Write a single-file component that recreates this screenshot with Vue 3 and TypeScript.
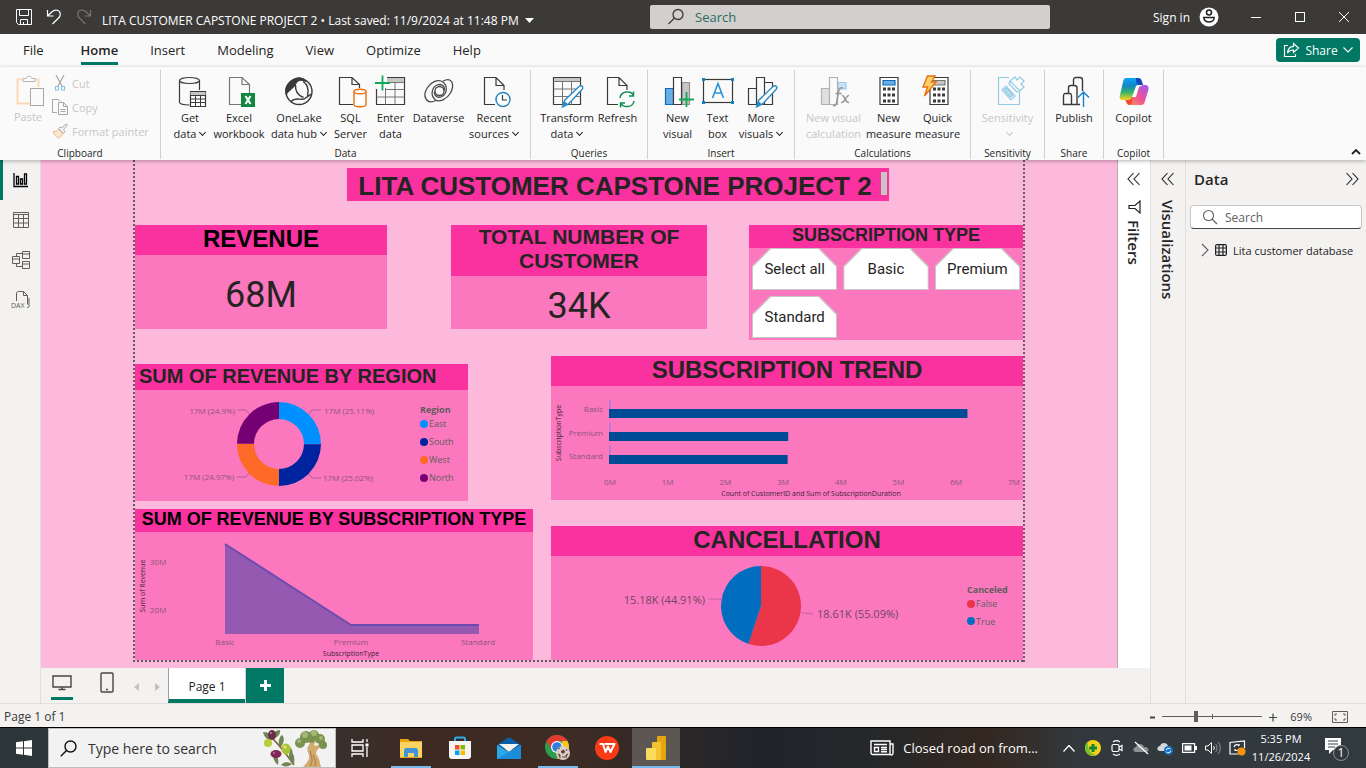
<script setup lang="ts">
import { ref } from 'vue'

interface Slice { label: string; value: number; color: string }

const menu = ['File', 'Home', 'Insert', 'Modeling', 'View', 'Optimize', 'Help']
const activeMenu = ref('Home')
const subscriptions = ['Select all', 'Basic', 'Premium', 'Standard']
const zoom = ref(69)

const regions: Slice[] = [
  { label: 'East', value: 25.11, color: '#0090ff' },
  { label: 'South', value: 25.02, color: '#0023a0' },
  { label: 'West', value: 24.97, color: '#ff6a28' },
  { label: 'North', value: 24.9, color: '#740074' },
]
const cancelled: Slice[] = [
  { label: 'False', value: 55.09, color: '#eb3548' },
  { label: 'True', value: 44.91, color: '#006dbf' },
]
const trend = [
  { label: 'Basic', value: 6.18 },
  { label: 'Premium', value: 3.09 },
  { label: 'Standard', value: 3.08 },
]
const ticks = [0, 1, 2, 3, 4, 5, 6, 7]

function arcs(slices: Slice[], cx: number, cy: number, outer: number, inner: number) {
  const total = slices.reduce((sum, s) => sum + s.value, 0)
  let from = 0
  return slices.map((s) => {
    const to = from + (s.value / total) * Math.PI * 2
    const at = (r: number, a: number) => `${(cx + r * Math.sin(a)).toFixed(2)} ${(cy - r * Math.cos(a)).toFixed(2)}`
    const large = to - from > Math.PI ? 1 : 0
    const d = `M${at(outer, from)}A${outer} ${outer} 0 ${large} 1 ${at(outer, to)}L${at(inner, to)}` +
      (inner ? `A${inner} ${inner} 0 ${large} 0 ${at(inner, from)}Z` : 'Z')
    from = to
    return { d, color: s.color, label: s.label }
  })
}
const donut = arcs(regions, 144, 54, 42, 25)
const pie = arcs(cancelled, 210, 50, 40, 0)
</script>

<template>
  <div class="window">
    <header class="titlebar">
      <div class="quick">
        <button aria-label="Save"><svg width="16" height="16" viewBox="0 0 16 16" fill="none" stroke="#fff"><path d="M.5.500h15v15H2.500l-2-2zM3.500.500v6h9v-6M4.500 15.500v-5h7v5M7.500 13v2.500" /></svg></button>
        <button aria-label="Undo"><svg width="16" height="16" viewBox="0 0 16 16" fill="none" stroke="#fff" stroke-width="1.200"><path d="M1.500 1v6h6M1.500 7 6 2.800C9-.2 14 1 14.300 5c.1 2-.6 3-2 4.300L6.500 15" /></svg></button>
        <button aria-label="Redo"><svg width="16" height="16" viewBox="0 0 16 16" fill="none" stroke="#777674" stroke-width="1.200"><path d="M14.500 1v6h-6M14.500 7 10 2.800C7-.2 2 1 1.700 5c-.1 2 .6 3 2 4.300L9.500 15" /></svg></button>
      </div>
      <button class="doc-name">LITA CUSTOMER CAPSTONE PROJECT 2 • Last saved: 11/9/2024 at 11:48 PM
        <svg width="9" height="5" viewBox="0 0 9 5"><path d="M0 0h9L4.500 5z" fill="#fff" /></svg>
      </button>
      <label class="top-search">
        <svg width="18" height="18" viewBox="0 0 18 18" fill="none" stroke="#3b3a39" stroke-width="1.300"><circle cx="11" cy="6.500" r="5" /><path d="M7.500 10 1.500 16" /></svg>
        <input type="text" placeholder="Search" aria-label="Search" />
      </label>
      <div class="account">
        <button class="signin">Sign in
          <svg width="20" height="20" viewBox="0 0 20 20"><circle cx="10" cy="10" r="9.500" fill="#fff" /><circle cx="10" cy="5.500" r="2.500" fill="none" stroke="#222" stroke-width="1.500" /><path d="M4.800 10.500h10.400c0 6-10.400 6-10.400 0z" fill="none" stroke="#222" stroke-width="1.500" /></svg>
        </button>
        <button class="winbtn" aria-label="Minimize"><svg width="12" height="12" viewBox="0 0 12 12" stroke="#fff"><path d="M1 6.500h10" /></svg></button>
        <button class="winbtn" aria-label="Maximize"><svg width="12" height="12" viewBox="0 0 12 12" fill="none" stroke="#fff"><rect x="1.500" y="1.500" width="9" height="9" /></svg></button>
        <button class="winbtn" aria-label="Close"><svg width="12" height="12" viewBox="0 0 12 12" stroke="#fff"><path d="m1 1 10 10M11 1 1 11" /></svg></button>
      </div>
    </header>

    <nav class="menu">
      <button v-for="m in menu" :key="m" :class="{ active: m === activeMenu }" @click="activeMenu = m">{{ m }}</button>
      <button class="share">
        <svg width="17" height="16" viewBox="0 0 17 16" fill="none" stroke="#fff" stroke-width="1.200"><path d="M5 3.500H1.500v11h11V12" /><path d="M10.500 1.500 15.500 6l-5 4.500V8C7.500 7.800 5.800 9 4.500 11c.3-3.800 2.500-6.500 6-6.700z" /></svg>
        Share
        <svg width="10" height="6" viewBox="0 0 10 6" fill="none" stroke="#fff" stroke-width="1.200"><path d="m.5.500 4.500 4.500L9.500.5" /></svg>
      </button>
    </nav>

    <section class="ribbon">
      <div class="group g-clip">
        <div class="tools">
          <button class="tool w-paste" disabled>
            <svg viewBox="0 0 32 32" fill="none"><path d="M10 4.500H5.500v24H18M22 4.500h4.500V12" stroke="#fbd9b5" stroke-width="2" /><path d="M11 6.500v-3h3c1-3 5-3 6 0h3v3z" stroke="#b8b6b4" fill="#fafafa" /><rect x="18.500" y="13.500" width="13" height="17" stroke="#a9a7a5" fill="#fafafa" /></svg>
            <span>Paste</span>
          </button>
          <div class="mini">
            <button disabled><svg width="16" height="16" viewBox="0 0 16 16" fill="none"><path d="m4 0 6 11M12 0 6 11" stroke="#a9a7a5" stroke-width="1.200" /><rect x="3.500" y="11.500" width="3" height="3.500" stroke="#83c1e6" /><rect x="9.500" y="11.500" width="3" height="3.500" stroke="#83c1e6" /></svg>Cut</button>
            <button disabled><svg width="16" height="16" viewBox="0 0 16 16" fill="none" stroke="#a9a7a5"><path d="M5 13.500H.5V.500h6l1.500 2M6.500 3.500h5l4 4v8h-9zM11.500 3.500v4h4M8.500 10.500h5M8.500 12.500h5" /></svg>Copy</button>
            <button disabled><svg width="16" height="16" viewBox="0 0 16 16" fill="none"><path d="M1 8.500c2.500.2 4-.5 5.500-2l4.500 4c-1 2-2.500 3.500-4.500 4.500C4 13.500 2 11.500 1 8.500z" fill="#fce7d3" stroke="#f5b98b" /><path d="M6.500 5.500 11.500 10.500l1.500-2-1.500-2 4-4.500-1.500-1.300-4 4.300-1.800-1z" stroke="#a9a7a5" fill="#fafafa" /></svg>Format painter</button>
          </div>
        </div>
        <div class="caption">Clipboard</div>
      </div>

      <div class="group g-data">
        <div class="tools">
          <button class="tool w-get">
            <svg viewBox="0 0 32 32" fill="none" stroke="#3b3a39" stroke-width="1.200"><ellipse cx="15.500" cy="4.500" rx="10" ry="3" /><path d="M5.500 4.500V26c0 2 5 3 10 3M25.500 4.500V14" /><path d="M16.500 15.500h15v15h-15z" fill="#fff" /><path d="M16.500 16h15v3h-15z" fill="#c8c6c4" stroke="none" /><path d="M16.500 19.500h15M16.500 23h15M16.500 26.500h15M21.500 19v12M26.500 19v12" stroke-width="1" /></svg>
            <span>Get<br />data<i class="chev"></i></span>
          </button>
          <button class="tool w-excel">
            <svg viewBox="0 0 32 32" fill="none" stroke="#797775" stroke-width="1.200"><path d="M18 28.500H6.500v-27H19l7.500 7V17M19 1.500v7h7.500" /><path d="M18 17h14v14H18z" fill="#10893e" stroke="none" /><path d="m22.500 20 5 8M27.500 20l-5 8" stroke="#fff" stroke-width="2" /></svg>
            <span>Excel<br />workbook</span>
          </button>
          <button class="tool w-lake">
            <svg viewBox="0 0 32 32" fill="none" stroke="#3b3a39" stroke-width="1.400"><circle cx="16" cy="15.500" r="13" /><path d="M11 3.500C14 1 20 1.500 22 5c-4-1.500-8-.5-9.500 3C10 13 4 15 3.300 18.500 1.500 12 5 6 11 3.500z" fill="#3b3a39" /><path d="M12.500 9c-.5 7 4 11 8 12.500M8 25.500c5-5 11-.5 14-3 3-2 5-4 7-4.500M20 5.500c5 3 6 8 4.500 14.500" /></svg>
            <span>OneLake<br />data hub<i class="chev"></i></span>
          </button>
          <button class="tool w-sql">
            <svg viewBox="0 0 32 32" fill="none" stroke="#3b3a39" stroke-width="1.200"><path d="M18 28.500H4.500v-27H17l7.500 7V12M17 1.500v7h7.500" /><path d="M19 15.500v13c0 3 12 3 12 0v-13" fill="#fff" stroke="#e8700f" stroke-width="1.400" /><ellipse cx="25" cy="15.500" rx="6" ry="2.200" fill="#fff" stroke="#e8700f" stroke-width="1.400" /></svg>
            <span>SQL<br />Server</span>
          </button>
          <button class="tool w-enter">
            <svg viewBox="0 0 32 32" fill="none" stroke="#3b3a39" stroke-width="1.200"><path d="M12 1.500h17.500v27h-28V13" /><path d="M12 2h17v4H12z" fill="#c8c6c4" stroke="none" /><path d="M12 6.500h17.500M10 13.500h19.500M1.500 21h28M10.500 12v16.500M20 6.500v22" stroke="#797775" stroke-width="1" /><path d="M7.500-.5v15M0 7h15" stroke="#0fa958" stroke-width="1.800" /></svg>
            <span>Enter<br />data</span>
          </button>
          <button class="tool w-verse">
            <svg viewBox="0 0 32 32" fill="none" stroke="#4a4947" stroke-width="1.300"><path d="M13 24.500C3 29-1 20 4.500 11.500 8 6 15 2.500 20 6c5 4 4 12-1 14.500-4 2-8-.5-7.500-5" /><path d="M20 5c9-4.500 12 3 7.500 12C24 23 16 27 12 23.500 7 19 9 11.500 14 9c4-1.500 8 .5 7.500 5.500" /><circle cx="16.500" cy="15" r="4.500" /></svg>
            <span>Dataverse</span>
          </button>
          <button class="tool w-recent">
            <svg viewBox="0 0 32 32" fill="none" stroke="#3b3a39" stroke-width="1.200"><path d="M17 28.500H6.500v-27H18l8 8V14M18 1.500v8h8" /><circle cx="25" cy="23.500" r="7" fill="#fff" stroke="#2b88b8" stroke-width="1.500" /><path d="M24.500 19v5H29" /></svg>
            <span>Recent<br />sources<i class="chev"></i></span>
          </button>
        </div>
        <div class="caption">Data</div>
      </div>

      <div class="group g-query">
        <div class="tools">
          <button class="tool w-trans">
            <svg viewBox="0 0 32 32" fill="none" stroke="#3b3a39" stroke-width="1.200"><path d="M2.500 1.500h27v27h-27z" /><path d="M3 2h26v3H3z" fill="#c8c6c4" stroke="none" /><path d="M2.500 5.500h27M2.500 13h27M2.500 20.500h27M11.500 5.500v23M20.500 5.500v23" stroke="#797775" stroke-width="1" /><path d="m11.500 31 2-6.500L28 10.500c3-2 5 1 3 3L17.500 28z" fill="#fff" stroke="#2b88c8" stroke-width="1.400" /><path d="m11.500 31 2-6 3.500 3.500z" fill="#2b88c8" stroke="none" /></svg>
            <span>Transform<br />data<i class="chev"></i></span>
          </button>
          <button class="tool w-refresh">
            <svg viewBox="0 0 32 32" fill="none" stroke="#3b3a39" stroke-width="1.200"><path d="M16 28.500H5.500v-27H17l8 8V14M17 1.500v8h8" /><path d="M18 22c1-7 11-8 13.500-2.500M31.500 15.500v4.500H27M32 25c-1 7-11 7-13.500 2M18.500 31.500V27H23" stroke="#119150" stroke-width="1.500" /></svg>
            <span>Refresh</span>
          </button>
        </div>
        <div class="caption">Queries</div>
      </div>

      <div class="group g-insert">
        <div class="tools">
          <button class="tool w-nv">
            <svg viewBox="0 0 32 32" fill="none" stroke="#3b3a39" stroke-width="1.200"><path d="M3.500 12.500h8v16h-8z" fill="#69afe5" stroke="#0f6cbd" /><path d="M20 6.500h7.500v22H20z" fill="#c8c6c4" stroke="#979593" /><path d="M11.500 1.500h8v27h-8z" fill="#fff" /><path d="M24.500 16v15M17 23.500h15" stroke="#0fa958" stroke-width="1.800" /></svg>
            <span>New<br />visual</span>
          </button>
          <button class="tool w-tb">
            <svg viewBox="0 0 32 32" fill="none"><rect x="1.500" y="3.500" width="29" height="23" stroke="#3b3a39" stroke-width="1.200" /><path d="M0 2h3v3H0zM29 2h3v3h-3zM0 25h3v3H0zM29 25h3v3h-3z" fill="#0f83c9" /><path d="m10.500 22 5.500-14.500L21.500 22M12.500 17h7" stroke="#2b93d1" stroke-width="1.600" /></svg>
            <span>Text<br />box</span>
          </button>
          <button class="tool w-mv">
            <svg viewBox="0 0 32 32" fill="none" stroke="#3b3a39" stroke-width="1.200"><path d="M3.500 12.500h8v16h-8zM11.500 1.500h8v27h-8zM19.500 6.500h8v22h-8z" /><path d="m11.500 31 2-6.500L28 10.500c3-2 5 1 3 3L17.500 28z" fill="#fff" stroke="#2b88c8" stroke-width="1.400" /><path d="m11.500 31 2-6 3.500 3.500z" fill="#2b88c8" stroke="none" /></svg>
            <span>More<br />visuals<i class="chev"></i></span>
          </button>
        </div>
        <div class="caption">Insert</div>
      </div>

      <div class="group g-calc">
        <div class="tools">
          <button class="tool w-nvc" disabled>
            <svg viewBox="0 0 32 32" fill="none" stroke="#b3b0ad" stroke-width="1.200"><path d="M3.500 12.500h8v16h-8z" fill="#e1dfdd" /><path d="M20 6.500h8V13h-8z" fill="#c7e3f7" stroke="#9cc9ea" /><path d="M11.500 1.500h8v27h-8z" fill="#fafafa" /><path d="M25 12c-3-1-4 1-4.500 4l-2 11c-.5 2.500-1.500 3-3.500 2.500M17.500 17.500h6M24 19.500c3-1 3 8 7 7M31 19.500c-3-1-4 8-8 7" stroke="#979593" stroke-width="1.500" /></svg>
            <span>New visual<br />calculation</span>
          </button>
          <button class="tool w-meas">
            <svg viewBox="0 0 32 32" fill="none" stroke="#3b3a39" stroke-width="1.200"><path d="M7 1.500h18v27H7z" fill="#fff" /><path d="M10 4.500h12v4.500H10z" fill="#69afe5" stroke="#0f6cbd" /><path d="M10 13h12M10 19h12M10 25h12" stroke-width="3" stroke-dasharray="3 1.500" /></svg>
            <span>New<br />measure</span>
          </button>
          <button class="tool w-meas">
            <svg viewBox="0 0 32 32" fill="none" stroke="#3b3a39" stroke-width="1.200"><path d="M8 1.500h18v27H8z" fill="#fff" /><path d="M11 4.500h12v4.500H11z" fill="#c8c6c4" stroke="#797775" /><path d="M11 13h12M11 19h12M11 25h12" stroke-width="3" stroke-dasharray="3 1.500" /><path d="M5.500 0H13l-3.500 6H14L2.500 20 5.500 11H1z" fill="#fdd066" stroke="#e8700f" stroke-width="1.400" /></svg>
            <span>Quick<br />measure</span>
          </button>
        </div>
        <div class="caption">Calculations</div>
      </div>

      <div class="group g-sens">
        <div class="tools">
          <button class="tool" disabled>
            <svg viewBox="0 0 32 32" fill="none" stroke="#93cbe6" stroke-width="1.200"><path d="M17 1.500H6.500v27h21V16" /><path d="m10 14 4-4 9 10-4 4zM13 13l7 8M18 5l5-4 2 3 3-3 4 4-3 3 3 3-4 4zM18 5l-1 3 8 8 3-1" /><path d="m12.500 14 2-2 6 7-2 2z" fill="#c7e3f2" /></svg>
            <span>Sensitivity<br /><i class="chev"></i></span>
          </button>
        </div>
        <div class="caption">Sensitivity</div>
      </div>

      <div class="group g-share">
        <div class="tools">
          <button class="tool">
            <svg viewBox="0 0 32 32" fill="none" stroke="#3b3a39" stroke-width="1.400"><path d="M5.500 28.500v-8c0-2 0-3 2-3h4c2 0 2 1 2 3v8zM10.500 17V12c0-2 1-2.500 2-2.500h4c2 0 2.500 1 2.500 2.500v16.500h-5.500M15.500 9V4c0-2 1-2.500 2.500-2.500h4c2 0 2.500 1 2.500 2.500v11M19 28.500h3" /><path d="M25.500 31V16M20 21.500l5.500-5.500 5.500 5.500" stroke="#0f83c9" /></svg>
            <span>Publish</span>
          </button>
        </div>
        <div class="caption">Share</div>
      </div>

      <div class="group g-copilot">
        <div class="tools">
          <button class="tool">
            <svg viewBox="0 0 32 32">
              <defs>
                <linearGradient id="cpA" x1="0" y1="0" x2="0" y2="1"><stop offset="0" stop-color="#0aa5f5" /><stop offset=".35" stop-color="#1485c9" /><stop offset=".65" stop-color="#36b56a" /><stop offset="1" stop-color="#fdd21c" /></linearGradient>
                <linearGradient id="cpB" x1="1" y1="0" x2="0" y2="1"><stop offset="0" stop-color="#9a5cf0" /><stop offset=".5" stop-color="#ee5097" /><stop offset="1" stop-color="#ff9c49" /></linearGradient>
              </defs>
              <path d="M8 2h12c2 0 3 1 3.500 2.500L25 9h-4c-2 0-3 .5-3.500 2.500L14 21c-.7 2-2 3-4 3H5c-3 0-4-2-3-5L5 6c.6-2.500 1.500-4 3-4z" fill="url(#cpA)" />
              <path d="M18 2h2c2 0 3 1 3.500 2.500L25 9h-5c-2-2-2-4-2-7z" fill="#1449c0" />
              <path d="M25 9h2c3 0 4 2 3.400 5L27 25c-.7 3-2 4-4 4H12c-2 0-3-1-3.500-2.500L7.500 24H10c2 0 3.300-1 4-3h4l3-10z" fill="url(#cpB)" />
              <path d="M7.500 24H10c2 0 3.300-1 4-3 .5 3 1 6-2 8-2 0-3-1-3.500-2.500z" fill="#f04a35" />
            </svg>
            <span>Copilot</span>
          </button>
        </div>
        <div class="caption">Copilot</div>
      </div>
      <button class="collapse" aria-label="Collapse ribbon"><svg width="10" height="6" viewBox="0 0 10 6" fill="none" stroke="#222" stroke-width="1.800"><path d="m1 5 4-4 4 4" /></svg></button>
    </section>

    <main class="work">
      <nav class="rail">
        <button class="on" aria-label="Report view"><svg width="16" height="16" viewBox="0 0 16 16" fill="none" stroke="#000" stroke-width="1.300"><path d="M1 1v13.500h14M3.500 4.500h2v7.500h-2zM7.500 7h2v5h-2zM11.500 2h2v10h-2z" /></svg></button>
        <button aria-label="Table view"><svg width="16" height="16" viewBox="0 0 16 16" fill="none" stroke="#605e5c"><path d="M.5.500h15v15H.5zM.5 2.500h15M.5 6.500h15M.5 11h15M5.500 2.500v13M10.500 2.500v13" /></svg></button>
        <button aria-label="Model view"><svg width="18" height="18" viewBox="0 0 18 18" fill="none" stroke="#605e5c"><path d="M.5 5.500h7v7h-7zM.5 8h7M10.500.500h7v7h-7zM10.500 3h7M10.500 10.500h7v7h-7zM10.500 13h7M4.500 5V2.500h6M4.500 13v2.500h6" /></svg></button>
        <button aria-label="DAX query view"><svg width="20" height="18" viewBox="0 0 20 18" fill="none" stroke="#605e5c"><path d="M5.500 10V3c0-2 .5-2.500 2-2.500h5l4 4v9M12.500.500v4h4M18 7v8c0 1-.5 1.500-2 1.500" /><text x="0" y="16.500" font-size="7" fill="#605e5c" stroke="none">DAX</text></svg></button>
      </nav>

      <section class="center">
        <div class="stage">
          <div class="canvas">
            <div class="sheet">
              <div class="banner-row">
                <h1 class="banner">LITA CUSTOMER CAPSTONE PROJECT 2<i class="handle"></i></h1>
              </div>
              <div class="kpis">
                <article class="card rev"><h2 class="h24 black">REVENUE</h2><p class="big">68M</p></article>
                <article class="card total"><h2 class="h22">TOTAL NUMBER OF CUSTOMER</h2><p class="big">34K</p></article>
                <article class="card slicer">
                  <h2 class="h18">SUBSCRIPTION TYPE</h2>
                  <div class="tiles"><button v-for="s in subscriptions" :key="s"><span>{{ s }}</span></button></div>
                </article>
              </div>
              <div class="charts">
                <div class="col left">
                  <article class="card region">
                    <h2 class="h20">SUM OF REVENUE BY REGION</h2>
                    <svg class="chart" viewBox="0 0 333 111">
                      <path v-for="a in donut" :key="a.label" :d="a.d" :fill="a.color" />
                      <g fill="none" stroke="#b35f94"><path d="m174 24 3-4h9M114 24l-3-4h-9M174 84l3 4h9M114 83l-3 4h-9" /></g>
                      <g class="lab"><text x="189" y="24">17M (25.11%)</text><text x="100" y="24" text-anchor="end">17M (24.9%)</text><text x="99" y="90" text-anchor="end">17M (24.97%)</text><text x="188" y="91">17M (25.02%)</text></g>
                      <text class="legend-t" x="285" y="23">Region</text>
                      <g v-for="(r, i) in regions" :key="r.label"><circle cx="289" :cy="34 + i * 18" r="4" :fill="r.color" /><text class="legend" x="294" :y="37 + i * 18">{{ r.label }}</text></g>
                    </svg>
                  </article>
                  <article class="card bysub">
                    <h2 class="h18 black">SUM OF REVENUE BY SUBSCRIPTION TYPE</h2>
                    <svg class="chart" viewBox="0 0 398 128">
                      <path d="M90 12 216 93H344V102H90z" fill="#9659b2" /><path d="M90 12 216 93H344" fill="none" stroke="#6c4bae" stroke-width="2" />
                      <g class="lab"><text x="15" y="33">30M</text><text x="15" y="81">20M</text><text x="90" y="113" text-anchor="middle">Basic</text><text x="216" y="113" text-anchor="middle">Premium</text><text x="343" y="113" text-anchor="middle">Standard</text></g>
                      <text class="axis" x="216" y="124">SubscriptionType</text>
                      <text class="axis" transform="translate(10 54) rotate(-90)">Sum of Revenue</text>
                    </svg>
                  </article>
                </div>
                <div class="col right">
                  <article class="card">
                    <h2 class="h24">SUBSCRIPTION TREND</h2>
                    <svg class="chart" viewBox="0 0 472 114">
                      <g v-for="(b, i) in trend" :key="b.label">
                        <rect x="58" :y="14 + i * 23" width="2" height="9" fill="#b77dd3" />
                        <rect x="58" :y="23 + i * 23" :width="b.value * 58" height="9" fill="#004b96" />
                        <text class="lab" x="52" :y="26 + i * 23.5" text-anchor="end">{{ b.label }}</text>
                      </g>
                      <text v-for="t in ticks" :key="t" class="lab" :x="59 + t * 57.7" y="99" text-anchor="middle">{{ t }}M</text>
                      <text class="axis" x="260" y="110">Count of CustomerID and Sum of SubscriptionDuration</text>
                      <text class="axis" transform="translate(10 47) rotate(-90)">SubscriptionType</text>
                    </svg>
                  </article>
                  <article class="card cancel">
                    <h2 class="h24">CANCELLATION</h2>
                    <svg class="chart" viewBox="0 0 472 104">
                      <path v-for="a in pie" :key="a.label" :d="a.d" :fill="a.color" />
                      <path d="M157 43h10l5 1M250 57h3l9 1" fill="none" stroke="#c9609a" />
                      <g class="lab-l"><text x="154" y="48" text-anchor="end">15.18K (44.91%)</text><text x="266" y="62">18.61K (55.09%)</text></g>
                      <text class="legend-t" x="416" y="37">Canceled</text>
                      <g v-for="(r, i) in cancelled" :key="r.label"><circle cx="420" :cy="48 + i * 17" r="4" :fill="r.color" /><text class="legend" x="425" :y="51 + i * 18">{{ r.label }}</text></g>
                    </svg>
                  </article>
                </div>
              </div>
            </div>
          </div>
          <aside class="filters">
            <button aria-label="Expand filters"><svg width="14" height="14" viewBox="0 0 14 14" fill="none" stroke="#222" stroke-width="1.100"><path d="M6.500 1 1 7l5.500 6M12.500 1 7 7l5.500 6" /></svg></button>
            <svg class="funnel" width="14" height="14" viewBox="0 0 14 14" fill="none" stroke="#222" stroke-width="1.200"><path d="M13 1v12L8 8.500H2v-3h6z" /></svg>
            <span class="vert">Filters</span>
          </aside>
        </div>
        <div class="pagetabs">
          <button class="view on" aria-label="Desktop layout"><svg width="20" height="16" viewBox="0 0 20 16" fill="none" stroke="#484644" stroke-width="1.400"><path d="M1 1h18v11H1zM10 12v2.500M6.500 14.500h7" /></svg></button>
          <button class="view" aria-label="Mobile layout"><svg width="14" height="21" viewBox="0 0 14 21" fill="none" stroke="#484644" stroke-width="1.400"><rect x="1" y="1" width="12" height="19" rx="1" /><path d="M6 17.500h2" /></svg></button>
          <button class="arrow" aria-label="Previous page"><svg width="5" height="8" viewBox="0 0 5 8"><path d="M5 0v8L0 4z" fill="#c3c1bf" /></svg></button>
          <button class="arrow" aria-label="Next page"><svg width="5" height="8" viewBox="0 0 5 8"><path d="M0 0v8l5-4z" fill="#c3c1bf" /></svg></button>
          <button class="tab">Page 1</button>
          <button class="add" aria-label="New page"><svg width="11" height="11" viewBox="0 0 11 11" stroke="#fff" stroke-width="3"><path d="M5.500 0v11M0 5.500h11" /></svg></button>
        </div>
      </section>

      <aside class="viz">
        <button aria-label="Expand visualizations"><svg width="14" height="14" viewBox="0 0 14 14" fill="none" stroke="#222" stroke-width="1.100"><path d="M6.500 1 1 7l5.500 6M12.500 1 7 7l5.500 6" /></svg></button>
        <span class="vert">Visualizations</span>
      </aside>

      <aside class="data">
        <div class="data-head"><h3>Data</h3><button aria-label="Collapse data"><svg width="14" height="14" viewBox="0 0 14 14" fill="none" stroke="#222" stroke-width="1.100"><path d="m1.500 1 5.500 6-5.500 6M7.500 1 13 7l-5.500 6" /></svg></button></div>
        <label class="data-search">
          <svg width="16" height="16" viewBox="0 0 16 16" fill="none" stroke="#605e5c" stroke-width="1.100"><circle cx="6.500" cy="6.500" r="5" /><path d="m10 10 5 5" /></svg>
          <input type="text" placeholder="Search" aria-label="Search fields" />
        </label>
        <button class="tree">
          <svg width="8" height="14" viewBox="0 0 8 14" fill="none" stroke="#605e5c" stroke-width="1.100"><path d="m1 1 6 6-6 6" /></svg>
          <svg width="12" height="12" viewBox="0 0 12 12" fill="none" stroke="#222" stroke-width="1.200"><rect x=".6" y=".6" width="10.800" height="10.800" rx="1.500" /><path d="M.6 4h10.800M.6 8h10.800M4 .6v10.800M8 .6v10.800" /></svg>
          <span>Lita customer database</span>
        </button>
      </aside>
    </main>

    <footer class="status">
      <span>Page 1 of 1</span>
      <div class="zoom">
        <button aria-label="Zoom out"><svg width="5" height="12" viewBox="0 0 5 12"><path d="M0 6.500h5" stroke="#444" stroke-width="2" /></svg></button>
        <input v-model="zoom" type="range" min="10" max="190" aria-label="Zoom level" />
        <button aria-label="Zoom in"><svg width="8" height="12" viewBox="0 0 8 12"><path d="M0 6.500h8M4 2.500v8" stroke="#444" stroke-width="1.200" /></svg></button>
        <span class="pct">{{ zoom }}%</span>
        <button aria-label="Fit to page"><svg width="16" height="12" viewBox="0 0 16 12" fill="none" stroke="#605e5c"><path d="M.5.500h15v11H.5z" /><path d="M3 5V3h2M11 3h2v2M13 7v2h-2M5 9H3V7" /></svg></button>
      </div>
    </footer>

    <footer class="taskbar">
      <button class="start" aria-label="Start"><svg width="16" height="16" viewBox="0 0 16 16" fill="#fff"><path d="M0 2.300 7 1.300v6.200H0zM8 1.200 16 0v7.500H8zM0 8.500h7v6.200l-7-1zM8 8.500h8V16l-8-1.200z" /></svg></button>
      <label class="tb-search">
        <svg width="17" height="17" viewBox="0 0 17 17" fill="none" stroke="#111" stroke-width="1.400"><circle cx="10.500" cy="6.500" r="5.500" /><path d="M6.500 10.500.800 16.300" /></svg>
        <input type="text" placeholder="Type here to search" aria-label="Type here to search" />
        <svg class="art" width="64" height="38" viewBox="0 0 64 38">
          <path d="M3 4c8 5 18 18 28 32" fill="none" stroke="#8b6340" stroke-width="1.500" />
          <g fill="#6f8552"><path d="M0 3c5 0 8 3 9 8-5 0-8-3-9-8zM9 7c0-3 5-6 8-6 1 4-3 8-7 9zM16 16c-1-4 1-9 3-10 3 3 2 8-1 12zM12 24c3 3 4 8 3 12-4-3-5-7-5-11zM30 35c-4-4-5-9-2-13 3 3 4 8 3 13zM25 29c2-5 2-9 0-12 5 2 6 8 3 13zM18 36c2-3 7-4 11-1-3 3-8 3-11 1z" /></g>
          <ellipse cx="9" cy="6" rx="4" ry="5" fill="#6d2f4c" /><ellipse cx="5" cy="14" rx="4" ry="4" fill="#b6cf3a" /><ellipse cx="23" cy="20" rx="4.500" ry="5.500" fill="#a9c437" /><ellipse cx="13" cy="25" rx="5.500" ry="4" fill="#7f2857" /><circle cx="8" cy="4" r="1" fill="#b98299" /><circle cx="22" cy="18" r="1.500" fill="#d9ec82" /><circle cx="11" cy="24" r="1" fill="#bd7899" />
          <path d="M40 38c5-5 8-9 5-15-2-4 1-7 4-12l4 1c-3 5-2 7 5 2l2 2c-8 6-8 8-5 12 2 4 2 7 3 10z" fill="#d3ab6f" /><path d="M47 37c4-6 1-10 0-15M52 37c1-5 0-7-2-11" stroke="#a27a41" fill="none" />
          <g fill="#7b9350"><circle cx="37" cy="14" r="5" /><circle cx="43" cy="8" r="6" /><circle cx="51" cy="6" r="5" /><circle cx="57" cy="10" r="5" /><circle cx="60" cy="16" r="4" /><circle cx="48" cy="9" r="5" /></g><g fill="#a3b873"><circle cx="42" cy="6" r="3" /><circle cx="51" cy="4" r="3" /><circle cx="36" cy="12" r="2" /><circle cx="58" cy="9" r="2" /></g>
        </svg>
      </label>
      <button class="app" aria-label="Task view"><svg width="18" height="18" viewBox="0 0 18 18" fill="none" stroke="#fff" stroke-width="1.300"><path d="M1 0v3h11V0M1 6h11v6H1zM1 18v-3h11v3M16 0v3M16 8v10" /><path d="M14.500 4.500h3v3h-3z" fill="#fff" stroke="none" /></svg></button>
      <button class="app" aria-label="File Explorer"><svg width="22" height="20" viewBox="0 0 22 20"><path d="M0 1h8l2 2h12v17H0z" fill="#e8a20c" /><path d="M0 4h22v15H0z" fill="#fcd462" /><path d="M4 19v-6c0-2 1-3 2-3h10c1 0 2 1 2 3v6h-4v-4H8v4z" fill="#3f95d8" /></svg><i class="run"></i></button>
      <button class="app" aria-label="Microsoft Store"><svg width="24" height="24" viewBox="0 0 24 24"><path d="M7 6V3c0-1 .5-1.500 1.500-1.500h7c1 0 1.500.5 1.500 1.500v3" fill="none" stroke="#2ea9ea" stroke-width="2" /><path d="M1 5h22v15c0 2-1 3-3 3H4c-2 0-3-1-3-3z" fill="#f5f5f5" /><path d="M7 9h4.500v4.500H7z" fill="#f25022" /><path d="M12.500 9H17v4.500h-4.500z" fill="#7fba00" /><path d="M7 14.500h4.500V19H7z" fill="#00a4ef" /><path d="M12.500 14.500H17V19h-4.500z" fill="#ffb900" /></svg></button>
      <button class="app" aria-label="Mail"><svg width="24" height="22" viewBox="0 0 24 22"><path d="M0 8 12 0l12 8v3H0z" fill="#0a5fa8" /><path d="M2 7h20l-10 8z" fill="#eef3f6" /><path d="M0 8v14h24V8l-12 7z" fill="#29a8ea" /><path d="M0 22 24 8v14z" fill="#1c8dd9" /></svg></button>
      <button class="app" aria-label="Chrome"><svg width="26" height="26" viewBox="0 0 26 26"><circle cx="12" cy="12" r="12" fill="#2b9e4e" /><path d="M1.600 6A12 12 0 0 1 22.400 6H12L7 15z" fill="#e33b2e" /><path d="M22.400 6A12 12 0 0 1 12 24l5-9V6z" fill="#fbc116" /><circle cx="12" cy="12" r="6" fill="#fff" /><circle cx="12" cy="12" r="4.800" fill="#2f7de1" /><circle cx="18" cy="18" r="7" fill="#d6cfc6" /><path d="m16.500 16 1.500-1 1.500 1-.5 2h-2zM13 19l2 1v3M23 19l-2 1v3M17 22h3M13 14l2-1M22 14l-1 2" fill="#6d3c34" stroke="#6d3c34" /></svg><i class="run"></i></button>
      <button class="app" aria-label="WPS Office"><svg width="24" height="24" viewBox="0 0 24 24"><circle cx="12" cy="12" r="12" fill="#fb3a17" /><path d="M4.500 8H8l2.500 8L13 10.500 15.500 16 19.500 8H9.500" fill="none" stroke="#fff" stroke-width="2" stroke-linejoin="round" /></svg></button>
      <button class="app current" aria-label="Power BI"><svg width="20" height="24" viewBox="0 0 20 24"><rect x="11" y="0" width="9" height="24" rx="1" fill="#e6a511" /><rect x="6" y="6" width="9" height="18" rx="1" fill="#f2c32f" /><rect x="0" y="12" width="10" height="12" rx="1" fill="#f9dc5c" /></svg><i class="run"></i></button>
      <button class="news"><svg width="24" height="16" viewBox="0 0 24 16" fill="none" stroke="#fff" stroke-width="1.400"><path d="M3 1h17v12c0 3 3 2.500 3 0V4h-3M20 14.500H3c-1.500 0-2-.5-2-2V1h3M4 4.500h13M4.500 7.500h4v4h-4zM11 7.500h6M11 9.500h6M11 11.700h6" /></svg>Closed road on from...</button>
      <div class="tray">
        <button aria-label="Hidden icons"><svg width="12" height="7" viewBox="0 0 12 7" fill="none" stroke="#fff" stroke-width="1.300"><path d="m.5 6.500 5.500-6 5.500 6" /></svg></button>
        <button aria-label="Security"><svg width="16" height="16" viewBox="0 0 16 16"><circle cx="8" cy="8" r="8" fill="#f4d21c" /><path d="M1 4a8 8 0 0 0 10 11C6 14 2 10 3 3z" fill="#6cc331" /><path d="M8 4v8M4 8h8" stroke="#148537" stroke-width="3" /></svg></button>
        <button aria-label="Meet now"><svg width="14" height="16" viewBox="0 0 14 16" fill="none" stroke="#fff" stroke-width="1.200"><rect x="2" y="4.500" width="7" height="7" rx="1.500" /><path d="m9 7 3-1.500v5L9 9M3 2c2-1.500 5-1.500 7 0M3 14c2 1.500 5 1.500 7 0" /></svg></button>
        <button aria-label="OneDrive offline"><svg width="16" height="14" viewBox="0 0 16 14"><path d="M3 11c-4 0-3-5 0-5 1-4 7-4 8 0 5-1 6 5 2 5z" fill="#8c9193" /><path d="m2 1 13 12" stroke="#fff" stroke-width="1.300" /></svg></button>
        <button aria-label="OneDrive sync"><svg width="16" height="14" viewBox="0 0 16 14"><path d="M3 10c-4 0-3-5 0-5 1-4 7-4 8 0 4 0 5 5 2 5z" fill="#d4d8da" /><circle cx="11.500" cy="9.500" r="4.500" fill="#1673c8" /><path d="M9 9c1-2 3-2 4.500-1M14 10c-1 2-3 2-4.500 1" stroke="#fff" fill="none" /></svg></button>
        <button aria-label="Battery"><svg width="15" height="10" viewBox="0 0 15 10"><path d="M.6.600h12v8.800H.600z" fill="none" stroke="#fff" stroke-width="1.200" /><path d="M2.500 2.500h7v5h-7zM13 3h2v4h-2z" fill="#fff" /></svg></button>
        <button aria-label="Volume"><svg width="16" height="14" viewBox="0 0 16 14" fill="none" stroke="#fff"><path d="M.5 5H3l3.500-3.500v11L3 9H.5zM8.500 5c1 1 1 3 0 4" /><path d="M10.500 3c2 2 2 6 0 8M13 1c3 3 3 9 0 12" stroke="#93989a" /></svg></button>
        <button aria-label="Windows Update"><svg width="17" height="16" viewBox="0 0 17 16" fill="none" stroke="#fff" stroke-width="1.200"><path d="M9 14H1V2.500L15.500 1v7M5 7c1-3 4-3 5-1V4M10 9c-1 2-4 2-4 0v2" /><circle cx="12.500" cy="11.500" r="4" fill="#f7930d" stroke="none" /></svg></button>
        <button class="clock"><span>5:35 PM</span><span>11/26/2024</span></button>
        <button class="notes" aria-label="1 new notification"><svg width="26" height="26" viewBox="0 0 26 26"><path d="M1 3h16v12H9l-4 4v-4H1z" fill="#fff" /><path d="M4 6h10M4 9h10M4 12h7" stroke="#3a4042" stroke-width="1.200" /><circle cx="17" cy="18" r="7.500" fill="#32393c" stroke="#8c9193" /><text x="17" y="22" text-anchor="middle" font-size="12" fill="#fff">1</text></svg></button>
      </div>
    </footer>
  </div>
</template>

<style>
html, body { margin: 0; overflow: hidden; }
</style>

<style scoped>
* { box-sizing: border-box; }
.window { display: flex; flex-direction: column; height: 100vh; font-family: "Open Sans", "Noto Sans", sans-serif; font-size: 12px; color: #252423; background: #f3f2f1; }
button { border: 0; padding: 0; margin: 0; background: none; font: inherit; color: inherit; display: flex; align-items: center; white-space: nowrap; }
input { font: inherit; border: 0; padding: 0; background: none; outline: 0; min-width: 0; flex: 1; }
svg { flex: none; display: block; }
h1, h2, h3, p { margin: 0; }

.titlebar { display: grid; grid-template-columns: 102fr 548fr 400fr 316fr; align-items: center; height: 34px; background: #3b3a39; color: #fff; flex: none; }
.quick { display: flex; gap: 14px; padding-left: 16px; }
.doc-name { gap: 6px; padding-top: 6px; font-size: 12px; }
.top-search { display: flex; align-items: center; height: 24px; background: #d2d0ce; border-radius: 2px; padding-left: 17px; gap: 10px; font-size: 13px; }
.top-search input::placeholder { color: #2c6b5c; opacity: 1; }
.account { display: flex; align-items: center; justify-content: flex-end; }
.signin { gap: 9px; margin-right: 15px; }
.winbtn { width: 44px; height: 34px; justify-content: center; }

.menu { display: flex; gap: 32px; height: 33px; padding: 0 6px 0 23px; background: #fafafa; font-size: 13px; flex: none; }
.menu button { height: 31px; padding-top: 3px; border-bottom: 3px solid transparent; }
.menu button:first-child { margin-right: 5px; }
.menu .active { font-weight: 600; border-color: #007864; }
.menu .share { margin: 4px 0 0 auto; height: 24px; width: 84px; padding: 0; border: 0; border-radius: 4px; background: #007864; color: #fff; font-size: 12px; gap: 5px; justify-content: center; }

.ribbon { display: flex; height: 93px; padding-top: 3px; background: #fafafa; flex: none; position: relative; z-index: 1; box-shadow: 0 1px 4px rgba(0, 0, 0, .3); }
.group { height: 89px; border-right: 1px solid #d2d0ce; display: flex; flex-direction: column; justify-content: space-between; flex: none; }
.tools { display: flex; justify-content: center; padding-top: 6px; font-size: 11px; }
.g-clip .tools { justify-content: flex-start; padding: 5px 0 0 6px; }
.tool { flex-direction: column; justify-content: flex-start; width: 60px; line-height: 16px; text-align: center; gap: 2px; }
.tool > svg { width: 32px; height: 32px; overflow: visible; }
.caption { text-align: center; font-size: 10px; line-height: 12px; }
.tool:disabled, .mini button:disabled { color: #c8c6c4; }
.chev { display: inline-block; width: 5px; height: 5px; border: solid currentColor; border-width: 0 1px 1px 0; transform: rotate(45deg); margin: 0 1px 3px 4px; }
.g-clip { width: 161px; } .g-data { width: 370px; } .g-query { width: 117px; } .g-insert { width: 147px; }
.g-calc { width: 176px; } .g-sens { width: 74px; } .g-share { width: 59px; } .g-copilot { width: 60px; }
.w-paste { width: 44px; } .w-get { width: 42px; } .w-excel { width: 56px; } .w-lake { width: 64px; } .w-sql { width: 39px; }
.w-enter { width: 41px; } .w-verse { width: 55px; } .w-recent { width: 56px; } .w-trans { width: 57px; } .w-refresh { width: 44px; }
.w-nv, .w-tb { width: 40px; } .w-mv { width: 47px; } .w-nvc { width: 61px; } .w-meas { width: 49px; }
.mini { display: flex; flex-direction: column; gap: 8px; padding-left: 2px; }
.mini button { gap: 4px; height: 16px; }
.collapse { margin: auto 5px 5px auto; }

.work { display: flex; flex: 1; min-height: 0; }
.rail { width: 41px; border-right: 1px solid #e1dfdd; flex: none; }
.rail button { width: 40px; height: 40px; padding-right: 2px; justify-content: center; border-left: 3px solid transparent; }
.rail .on { border-color: #007864; }
.center { flex: 1; min-width: 0; display: flex; flex-direction: column; }
.stage { flex: 1; display: flex; min-height: 0; }
.canvas { flex: 1; min-width: 0; background: #fcb9dc; padding: 0 92px 6px; border-right: 1px solid #b3b0ad; display: flex; }
.sheet { flex: 1; min-width: 0; display: flex; flex-direction: column; padding: 8px 2px 2px;
  background:
    repeating-linear-gradient(#605e5c 0 2px, transparent 2px 4px) left / 2px 100% no-repeat,
    repeating-linear-gradient(#605e5c 0 2px, transparent 2px 4px) right / 2px 100% no-repeat,
    repeating-linear-gradient(90deg, #605e5c 0 2px, transparent 2px 4px) bottom / 100% 2px no-repeat;
  font-family: "Liberation Sans", Arial, sans-serif; }
.banner-row { display: grid; grid-template-columns: 212fr 542fr 134fr; }
.banner { grid-column: 2; height: 33px; background: #f932a0; display: flex; align-items: center; justify-content: center; gap: 9px; font-size: 26px; line-height: 32px; white-space: nowrap; padding: 3px 0 0 9px; }
.handle { width: 6px; height: 23px; background: #c8c6c4; margin-bottom: 6px; }
.kpis { display: grid; grid-template-columns: 252fr 64fr 256fr 42fr 274fr; margin-top: 24px; align-items: start; }
.total { grid-column: 3; } .slicer { grid-column: 5; }
.card { background: #fb78bf; display: flex; flex-direction: column; min-width: 0; }
.card h2 { background: #f932a0; text-align: center; white-space: nowrap; }
.rev, .total { height: 104px; }
.slicer { height: 115px; }
.card .black { color: #000; }
.card .h24 { font-size: 24px; line-height: 28px; padding-bottom: 2px; }
.card .h22 { font-size: 21px; line-height: 24px; padding-bottom: 3px; white-space: normal; }
.card .h20 { font-size: 20px; line-height: 24px; padding: 0 4px 2px; text-align: left; }
.card .h18 { font-size: 18px; line-height: 20px; padding-bottom: 3px; }
.big { flex: 1; display: flex; align-items: center; justify-content: center; font: 36px Roboto, sans-serif; padding-top: 6px; }
.tiles { display: grid; grid-template-columns: repeat(3, 1fr); gap: 6px; padding: 0 3px; font: 15px Roboto, sans-serif; }
.tiles button, .tiles span { clip-path: polygon(18px 0, calc(100% - 18px) 0, 100% 18px, 100% 100%, 0 100%, 0 18px); }
.tiles button { height: 42px; padding: 1px; background: #c8c6c4; }
.tiles span { flex: 1; height: 40px; line-height: 40px; background: #fff; text-align: center; }
.charts { display: grid; grid-template-columns: 398fr 18fr 472fr; flex: 1; min-height: 0; }
.col { display: flex; flex-direction: column; min-width: 0; }
.left { padding-top: 24px; gap: 8px; }
.right { grid-column: 3; padding-top: 16px; gap: 26px; }
.region { margin-right: 65px; }
.bysub, .cancel { flex: 1; min-height: 0; }
.chart { width: 100%; height: auto; font-family: "Open Sans", sans-serif; }
.lab { font-size: 8px; fill: #8a5577; }
.lab-l { font-size: 11px; fill: #6f4761; }
.legend-t { font-size: 9px; font-weight: 700; fill: #605e5c; }
.legend { font-size: 9px; fill: #605e5c; }
.axis { font-size: 7px; fill: #402436; text-anchor: middle; }

.filters { width: 32px; background: #fff; display: flex; flex-direction: column; align-items: center; padding-top: 12px; flex: none; }
.vert { writing-mode: vertical-rl; font-weight: 600; font-size: 15px; line-height: 18px; }
.funnel { margin: 14px 0 6px; }
.pagetabs { display: flex; height: 35px; }
.view { width: 22px; margin-left: 10px; justify-content: center; border-bottom: 3px solid transparent; height: 32px; }
.view.on { border-color: #007864; }
.view + .view { margin-left: 23px; margin-right: 8px; }
.arrow { width: 21px; justify-content: center; padding-top: 2px; }
.tab { width: 77px; background: #fff; border-left: 1px solid #a19f9d; border-bottom: 4px solid #007864; justify-content: center; padding-top: 5px; }
.add { width: 39px; background: #007864; justify-content: center; border-left: 1px solid #d2d0ce; }
.viz { width: 35px; border-left: 1px solid #e1dfdd; display: flex; flex-direction: column; align-items: center; gap: 14px; padding-top: 12px; flex: none; }
.data { width: 181px; border-left: 1px solid #e1dfdd; padding: 0 4px; flex: none; }
.data-head { display: flex; justify-content: space-between; align-items: center; height: 38px; padding: 0 3px 0 4px; }
h3 { font-size: 15px; font-weight: 600; }
.data-search { display: flex; align-items: center; gap: 7px; height: 24px; margin-top: 7px; padding-left: 11px; background: #fff; border: 1px solid #c8c6c4; border-bottom-color: #484644; border-radius: 4px; }
.data-search input::placeholder { color: #605e5c; opacity: 1; }
.tree { margin: 14px 0 0 11px; gap: 6px; height: 14px; font-size: 11px; }

.status { height: 24px; border-top: 1px solid #e1dfdd; display: flex; align-items: center; justify-content: space-between; padding: 2px 18px 0 4px; flex: none; color: #3b3a39; }
.zoom { display: flex; align-items: center; gap: 7px; }
.zoom input { appearance: none; width: 100px; flex: none; height: 12px; margin: 0; background: linear-gradient(#605e5c, #605e5c) center / 100% 1px no-repeat, linear-gradient(#605e5c, #605e5c) center / 1px 5px no-repeat; }
.zoom input::-webkit-slider-thumb { appearance: none; width: 4px; height: 11px; background: #605e5c; }
.pct { padding: 0 13px 0 6px; font-size: 11px; }

.taskbar { height: 41px; display: flex; border-top: 1px solid #000; color: #fff; flex: none; background: linear-gradient(90deg, #2c3538 0 48px, #38302c 336px, #3d2a22 420px, #3d2c25 580px, #20242a 760px, #26282a 880px, #33271f 980px, #32393c 1080px, #313a3f); }
.start { width: 48px; justify-content: center; }
.tb-search { width: 288px; flex: none; background: #f2f2f2; border: 1px solid #bdbdbd; display: flex; align-items: center; padding: 0 8px 0 11px; gap: 11px; font-size: 14px; }
.tb-search input::placeholder { color: #333; opacity: 1; }
.app { width: 48px; display: grid; place-items: center; align-content: center; position: relative; margin-right: 1px; }
.tb-search + .app { margin-right: 3px; }
.run { position: absolute; left: 4px; right: 4px; bottom: 0; height: 2px; background: #76b9ed; }
.current { background: #5d5754; } .current .run { left: 0; right: 0; }
.news { margin-left: auto; gap: 9px; font-size: 13px; }
.tray { display: flex; align-items: center; margin-left: 19px; }
.tray button { width: 24px; justify-content: center; }
.tray .clock { width: 64px; flex-direction: column; font-size: 11px; line-height: 18px; }
.tray .notes { width: 32px; margin: 0 13px 0 8px; }
</style>
